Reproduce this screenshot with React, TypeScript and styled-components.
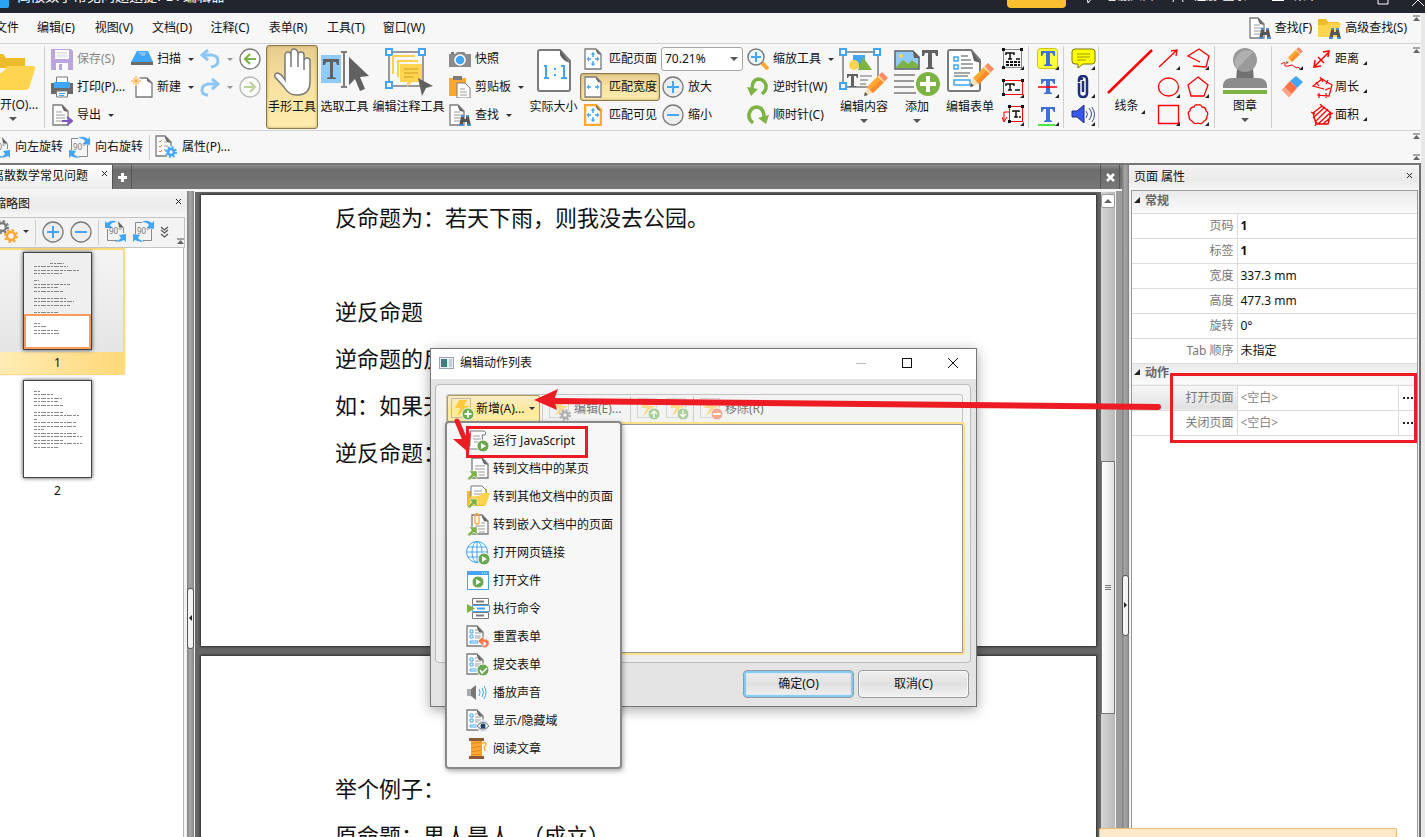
import React from "react";
import styled, { createGlobalStyle, css } from "styled-components";

const Global = createGlobalStyle`
  * { box-sizing: border-box; }
  html, body { margin: 0; }
  body, button, select {
    font-family: "Noto Sans", "Noto Sans CJK SC", sans-serif;
    font-size: 12px;
    line-height: 16px;
    color: #111;
  }
  button { background: none; border: 0; padding: 0; white-space: nowrap; }
  svg { display: block; flex: none; }
`;

/* ---------- palette ---------- */
const BLUE = "#42a5f5";
const GREEN = "#7cb342";
const GREY = "#7b7b7b";
const DARK = "#616161";
const YEL = "#ffd54f";
const ORG = "#ffa733";
const RED = "#ff0000";

/* ---------- shell ---------- */
const Shell = styled.div`
  position: relative;
  display: flex;
  flex-direction: column;
  height: 100vh;
  overflow: hidden;
  background: #e8e8e8;
`;
const TitleBar = styled.header`
  display: flex;
  align-items: flex-end;
  flex: none;
  height: 13px;
  padding-bottom: 5px;
  overflow: hidden;
  background: #22252e;
  color: #fff;
`;
const Logo = styled.span`
  width: 9px;
  height: 16px;
  border-radius: 0 0 2px 0;
  background: #29a3f2;
`;
const Title = styled.span`
  flex: 1;
  margin-left: 8px;
  font-size: 14px;
  line-height: 24px;
  white-space: nowrap;
`;
const BuyButton = styled.button`
  width: 59px;
  height: 26px;
  margin-right: 18px;
  border-radius: 4px;
  background: #fbc02d;
  line-height: 26px;
`;
const TitleItem = styled.button<{ $w: number }>`
  display: flex;
  align-items: center;
  justify-content: flex-start;
  gap: 10px;
  width: ${(p) => p.$w}px;
  line-height: 24px;
  color: #fff;
`;
const Frame = styled.div`
  display: flex;
  flex-direction: column;
  flex: 1;
  min-height: 0;
  margin-right: 4px;
  background: #f7f7f7;
`;
const MenuBar = styled.nav`
  display: flex;
  align-items: center;
  flex: none;
  height: 31px;
  padding-right: 1px;
  border-bottom: 1px solid #d2d2d2;
`;
const MenuItem = styled.button`
  width: 58px;
  flex: none;
  text-align: center;
  &:first-child {
    margin-left: -31px;
    padding-right: 8px;
    text-align: right;
  }
`;
const Grow = styled.div`
  flex: 1;
`;
const SearchButton = styled.button`
  display: flex;
  align-items: center;
  gap: 4px;
  margin-right: 6px;
`;
const CollapseSlot = styled.div<{ $end?: boolean }>`
  display: flex;
  flex-direction: column;
  align-self: stretch;
  justify-content: ${(p) => (p.$end ? "space-between" : "flex-start")};
  padding: 2px 0;
  margin-left: auto;
`;
const Ribbon = styled.div`
  display: flex;
  flex: none;
  height: 87px;
  padding-top: 1px;
  padding-right: 1px;
  margin-left: -17px;
  border-bottom: 1px solid #d2d2d2;
`;
const Sep = styled.i<{ $h?: number }>`
  flex: none;
  width: 1px;
  height: ${(p) => p.$h || 82}px;
  margin: 1px 5px 0 1px;
  background: #cfcfcf;
`;
const Col = styled.div<{ $w: number; $pad?: number; $center?: boolean }>`
  display: flex;
  flex-direction: column;
  flex: none;
  align-items: ${(p) => (p.$center ? "center" : "stretch")};
  width: ${(p) => p.$w}px;
  padding-left: ${(p) => p.$pad || 0}px;
`;
const hot = css`
  border: 1px solid #8d7a4b;
  border-radius: 3px;
  background: linear-gradient(#e6cd8f, #f7e0a0 45%, #ffeeb0);
  box-shadow: inset 0 0 3px #b59a5a;
`;
const Small = styled.button<{ $gap?: number; $off?: boolean; $hot?: boolean; $inset?: boolean }>`
  display: flex;
  align-items: center;
  gap: ${(p) => p.$gap ?? 4}px;
  height: 28px;
  padding-left: ${(p) => (p.$inset ? 3 : 0)}px;
  border: 1px solid transparent;
  opacity: ${(p) => (p.$off ? 0.5 : 1)};
  ${(p) => p.$hot && hot}
`;
const Big = styled.button<{ $w: number; $hot?: boolean }>`
  display: flex;
  flex-direction: column;
  align-items: center;
  flex: none;
  width: ${(p) => p.$w}px;
  height: 84px;
  padding-top: 2px;
  border: 1px solid transparent;
  ${(p) => p.$hot && hot}
`;
const BigLabel = styled.span`
  display: flex;
  align-items: flex-end;
  margin: 3px -4px 4px;
`;
const ZoomBox = styled.label`
  position: relative;
  display: flex;
  align-items: center;
  width: 82px;
  height: 28px;
`;
const ZoomSelect = styled.select`
  appearance: none;
  width: 100%;
  height: 24px;
  padding: 0 3px;
  border: 1px solid #a5a5a5;
  border-radius: 3px;
  background: #fff;
`;
const SelectArrow = styled.span`
  position: absolute;
  right: 5px;
  pointer-events: none;
`;
const SubBar = styled.div`
  display: flex;
  align-items: center;
  flex: none;
  height: 32px;
  padding-right: 1px;
  margin-left: -12px;
`;
const SubButton = styled.button`
  display: flex;
  align-items: center;
  gap: 4px;
  margin-right: 5px;
`;

/* ---------- workspace ---------- */
const Work = styled.div`
  display: flex;
  flex: 1;
  min-height: 0;
  border-top: 2px solid #777;
  border-right: 2px solid #6e6e6e;
  background: #9c9c9c;
`;
const Left = styled.div`
  display: flex;
  flex-direction: column;
  flex: 1;
  min-width: 0;
`;
const TabBar = styled.div`
  display: flex;
  flex: none;
  height: 26px;
  padding-right: 2px;
  border-bottom: 2px solid #f5f5f5;
  background: linear-gradient(#8e8e8e, #6c6c6c 20%, #777);
`;
const Tab = styled.div`
  display: flex;
  justify-content: space-between;
  flex: none;
  width: 120px;
  margin-left: -8px;
  padding: 2px 4px 0 0;
  background: linear-gradient(#fff, #ececec);
  white-space: nowrap;
`;
const TabLabel = styled.span`
  line-height: 18px;
`;
const TabClose = styled.button`
  height: 12px;
`;
const TabButton = styled.button`
  display: flex;
  align-items: center;
  justify-content: center;
  width: 20px;
  border: solid #555;
  border-width: 0 1px;
`;
const Row = styled.div`
  display: flex;
  flex: 1;
  min-height: 0;
`;
const Side = styled.aside`
  display: flex;
  flex-direction: column;
  flex: none;
  width: 187px;
  background: #f3f3f3;
`;
const PanelHead = styled.div<{ $h: number }>`
  display: flex;
  justify-content: space-between;
  flex: none;
  height: ${(p) => p.$h}px;
  padding: 4px 5px 0 5px;
  background: linear-gradient(#f3f3f3, #eaeaea 60%, #f6f6f6);
  line-height: 16px;
`;
const Cut = styled.span`
  margin-left: -11px;
  line-height: 18px;
`;
const SideTools = styled.div`
  display: flex;
  align-items: center;
  flex: none;
  height: 31px;
  margin-right: 2px;
  padding-bottom: 2px;
  border: solid #c4c4c4;
  border-width: 1px 1px 1px 0;
`;
const Tool = styled.button<{ $w: number }>`
  display: flex;
  align-items: center;
  justify-content: center;
  flex: none;
  width: ${(p) => p.$w}px;
`;
const ToolEnd = styled.span`
  align-self: flex-end;
  margin-left: auto;
`;
const Thumbs = styled.div`
  display: flex;
  flex-direction: column;
  gap: 1px;
  flex: 1;
  margin-right: 3px;
  border-right: 1px solid #b5b5b5;
  background: #fff;
  overflow: hidden;
`;
const ThumbItem = styled.button<{ $on?: boolean }>`
  display: flex;
  flex-direction: column;
  align-items: center;
  flex: none;
  width: 135px;
  height: ${(p) => (p.$on ? 127 : 128)}px;
  margin-left: -10px;
  padding-top: 2px;
  border: 2px solid transparent;
  ${(p) =>
    p.$on &&
    css`
      border-color: #ffd97a;
      border-radius: 2px;
      box-shadow: 0 0 1px #999;
      background: linear-gradient(#f4f4f4, #e2e2e2);
    `}
`;
const ThumbPage = styled.span`
  position: relative;
  width: 69px;
  height: 98px;
  background: #fff;
  border: 1px solid #444;
  box-shadow: 0 0 4px #444;
`;
const ThumbShade = styled.span`
  position: absolute;
  inset: 0 0 34px;
  background: rgba(120, 120, 120, 0.12);
`;
const ViewFrame = styled.span`
  position: absolute;
  left: 0;
  right: 0;
  bottom: 0;
  height: 35px;
  border: 2px solid #ff9a5c;
`;
const ThumbLabel = styled.span<{ $on?: boolean }>`
  align-self: stretch;
  margin-top: 2px;
  line-height: 22px;
  background: ${(p) => (p.$on ? "linear-gradient(90deg, #ffedb8, #ffd97a)" : "none")};
`;
const Splitter = styled.div`
  display: flex;
  align-items: center;
  flex: none;
  width: 7px;
  background: linear-gradient(90deg, #7d7d7d, #a6a6a6 40%, #989898 75%, #7d7d7d);
`;
const Grip = styled.button`
  display: flex;
  align-items: center;
  justify-content: center;
  width: 7px;
  height: 61px;
  margin-top: 208px;
  border: 1px solid #555;
  border-radius: 3px;
  background: #f4f4f4;
`;
const Viewer = styled.main`
  display: flex;
  flex: 1;
  min-width: 0;
  margin-right: 6px;
  border: solid #f2f2f2;
  border-width: 1px 1px 0 1px;
  background: #666;
`;
const Pages = styled.div`
  flex: 1;
  min-width: 0;
  padding: 3px 5px 0 6px;
  overflow: hidden;
`;
const Page = styled.article<{ $h: number; $top: number }>`
  height: ${(p) => p.$h}px;
  margin-bottom: 10px;
  padding: ${(p) => p.$top}px 0 0 134px;
  background: #fff;
  box-shadow: 0 0 2px 1px #2e2e2e;
  overflow: hidden;
`;
const Line = styled.p`
  height: 47px;
  margin: 0;
  font-size: 22px;
  line-height: 45px;
  white-space: nowrap;
`;
const ScrollBar = styled.div`
  display: flex;
  flex-direction: column;
  flex: none;
  width: 14px;
  padding-top: 2px;
  background: linear-gradient(90deg, #d6d6d6, #b9b9b9);
`;
const ScrollUp = styled.button`
  display: flex;
  align-items: center;
  justify-content: center;
  height: 14px;
  margin-bottom: 253px;
  border: 1px solid #999;
  border-radius: 2px;
  background: #fff;
`;
const ScrollThumb = styled.div`
  display: flex;
  align-items: center;
  justify-content: center;
  height: 253px;
  border: 1px solid #777;
  background: linear-gradient(90deg, #fff, #e2e2e2);
`;

/* ---------- property panel ---------- */
const Props = styled.aside`
  flex: none;
  width: 290px;
  padding-right: 1px;
  background: #f3f3f3;
`;
const PropBody = styled.div`
  height: calc(100% - 25px);
  margin-left: 2px;
  border: 1px solid #999;
  border-bottom: 0;
  background: #fff;
`;
const Grid = styled.table`
  width: 100%;
  border-collapse: collapse;
  table-layout: fixed;
`;
const NameCol = styled.col`
  width: 105px;
`;
const DotCol = styled.col`
  width: 18px;
`;
const Section = styled.th`
  height: 22px;
  padding: 0 0 2px 2px;
  border-bottom: 1px solid #dcdcdc;
  background: linear-gradient(#ebebeb, #fafafa);
  text-align: left;
  color: #666;
  white-space: nowrap;
`;
const Tri = styled.svg`
  && { display: inline-block; }
  margin-right: 5px;
  vertical-align: 2px;
`;
const Name = styled.th<{ $on?: boolean }>`
  height: 25px;
  padding: 0 3px 0 0;
  border: solid #dcdcdc;
  border-width: 0 1px 1px 0;
  background: ${(p) => (p.$on ? "linear-gradient(#f7f7f7, #e0e0e0)" : "none")};
  text-align: right;
  font-weight: 400;
  color: #777;
`;
const Value = styled.td<{ $bold?: boolean; $dim?: boolean }>`
  padding: 0 0 0 3px;
  border-bottom: 1px solid #dcdcdc;
  font-weight: ${(p) => (p.$bold ? 700 : 400)};
  color: ${(p) => (p.$dim ? "#888" : "#111")};
`;
const Dots = styled.td`
  padding: 0;
  border: solid #dcdcdc;
  border-width: 0 0 1px 1px;
`;
const DotButton = styled.button`
  display: flex;
  justify-content: center;
  width: 100%;
`;
const Toast = styled.div`
  position: absolute;
  right: 28px;
  bottom: 0;
  width: 298px;
  height: 9px;
  border: 1px solid #efbd72;
  border-bottom: 0;
  border-radius: 2px 2px 0 0;
  background: #fde8c9;
`;

/* ---------- dialog ---------- */
const Dialog = styled.section`
  position: absolute;
  left: 430px;
  top: 348px;
  width: 547px;
  border: 1px solid #777;
  background: #e4e4e4;
  box-shadow: 0 3px 12px rgba(0, 0, 0, 0.35);
`;
const DialogHead = styled.div`
  display: flex;
  align-items: center;
  height: 30px;
  padding: 0 3px 2px 8px;
  gap: 6px;
  background: #fff;
`;
const WinButton = styled.button`
  display: flex;
  justify-content: center;
  width: 40px;
`;
const DialogPanel = styled.div`
  margin: 5px 5px 7px 4px;
  padding: 9px 7px 7px 9px;
  border: 1px solid #bbb;
  border-radius: 4px;
  background: linear-gradient(#f4f4f4, #ececec);
`;
const ActionBar = styled.div`
  display: flex;
  align-items: center;
  height: 28px;
  margin-left: 1px;
  border: 1px solid #c4c4c4;
  border-bottom: 0;
  border-radius: 3px 3px 0 0;
`;
const Action = styled.button<{ $w: number; $open?: boolean }>`
  display: flex;
  align-items: center;
  gap: 1px;
  width: ${(p) => p.$w}px;
  height: 27px;
  padding-left: 2px;
  border: 1px solid transparent;
  color: ${(p) => (p.$open ? "#111" : "#777")};
  ${(p) =>
    p.$open &&
    css`
      border-color: #b39b5e;
      border-radius: 2px;
      background: linear-gradient(#f8ecc8, #ffe99a 60%, #fff0a8);
    `}
`;
const ActionSep = styled.i`
  width: 1px;
  height: 26px;
  margin: 0 2px;
  background: #ccc;
`;
const ActionList = styled.div`
  height: 233px;
  margin-right: -2px;
  border: 2px solid #ffe08a;
  border-radius: 3px;
  background: #fff;
  box-shadow: inset 0 0 0 1px #999;
`;
const DialogFoot = styled.div`
  display: flex;
  justify-content: flex-end;
  gap: 4px;
  padding: 0 7px 8px 0;
`;
const FootButton = styled.button<{ $main?: boolean }>`
  width: 111px;
  height: 28px;
  border: 1px solid #999;
  border-radius: 4px;
  background: linear-gradient(#f0f0f0, #e0e0e0 50%, #f2f2f2);
  box-shadow: ${(p) => (p.$main ? "inset 0 0 1px 2px #7fcaf7" : "inset 0 0 0 1px #f7f7f7")};
`;
const Popup = styled.ul`
  position: absolute;
  left: 14px;
  top: 72px;
  width: 177px;
  margin: 0;
  padding: 4px 0 4px 19px;
  border: 2px solid #888;
  border-radius: 4px;
  background: #f7f7f7;
  box-shadow: 1px 2px 5px rgba(0, 0, 0, 0.35);
  list-style: none;
`;
const PopupItem = styled.button`
  display: flex;
  align-items: center;
  gap: 3px;
  height: 28px;
`;
const Marks = styled.svg`
  position: absolute;
  left: 0;
  top: 0;
  pointer-events: none;
`;

/* ---------- icons ---------- */
type IconProps = { w: number; h: number; children: React.ReactNode };
const Icon = ({ w, h, children }: IconProps) => (
  <svg width={w} height={h} viewBox={`0 0 ${w} ${h}`} fill="none" aria-hidden="true">
    {children}
  </svg>
);
const Caret = ({ big }: { big?: boolean }) =>
  big ? (
    <Icon w={8} h={4}><path d="M0 0h8L4 4z" fill="#555" /></Icon>
  ) : (
    <Icon w={6} h={3}><path d="M0 0h6L3 3z" fill="#333" /></Icon>
  );
const Corner = ({ x, y }: { x: number; y: number }) => (
  <path d={`M${x} ${y - 4}v4h-4z`} fill="#222" stroke="none" />
);
const CornerMark = () => <Icon w={6} h={12}><Corner x={6} y={12} /></Icon>;
const CloseX = ({ s = 7 }: { s?: number }) => (
  <Icon w={s} h={s}><path d={`M1 1L${s - 1} ${s - 1}M${s - 1} 1L1 ${s - 1}`} stroke="#222" /></Icon>
);
const Collapse = () => (
  <Icon w={7} h={7}><path d="M0 1h7" stroke="#555" /><path d="M0 6h7L3.500 2z" fill="#666" /></Icon>
);
const Sheet = ({ x = 2, y = 1, w = 16, h = 19 }: { x?: number; y?: number; w?: number; h?: number }) => (
  <>
    <path d={`M${x} ${y}h${w - 6}l6 6v${h - 6}h-${w}z`} fill="#fff" stroke={GREY} strokeWidth="1.300" />
    <path d={`M${x + w - 6} ${y}v2l2 4l4 1z`} fill={DARK} />
  </>
);
const DocLines = () => <path d="M5 8h6M5 11h9M5 14h9M5 17h7" stroke="#999" />;
const Binoc = ({ x, y }: { x: number; y: number }) => (
  <g transform={`translate(${x} ${y})`}>
    <path d="M2 2h3v2h2V2h3l2 9H8V7H4v4H0z" fill="#555" />
    <path d="M2 0h3v2H2zM7 0h3v2H7zM0 9h4v2H0zM8 9h4v2H8z" fill="#4a90d9" />
  </g>
);
const Circ = ({ k, dim }: { k: string; dim?: boolean }) => (
  <Icon w={22} h={22}>
    <g opacity={dim ? 0.5 : 1}>
      <circle cx="11" cy="11" r="10" fill={k === "+" || k === "-" ? "#eee" : "#fff"} stroke={GREY} strokeWidth="1.300" />
      {k === "+" && <path d="M5 11h12M11 5v12" stroke={BLUE} strokeWidth="2" />}
      {k === "-" && <path d="M5 11h12" stroke={BLUE} strokeWidth="2" />}
      {k === "<" && <path d="M17 11H7M11 6l-5 5 5 5" stroke={GREEN} strokeWidth="2.200" />}
      {k === ">" && <path d="M5 11h10M11 6l5 5-5 5" stroke={GREEN} strokeWidth="2.200" />}
    </g>
  </Icon>
);
const Pencil = ({ x, y, s = 1 }: { x: number; y: number; s?: number }) => (
  <g transform={`translate(${x} ${y}) scale(${s})`}>
    <path d="M0 24l3-9 6 6z" fill="#ffe0b2" /><path d="M0 24l1-4 3 3z" fill="#555" />
    <path d="M3 15L15 3l6 6L9 21z" fill={ORG} /><path d="M6 18L18 6l3 3L9 21z" fill="#fb8c2e" />
    <path d="M15 3l3-3 6 6-3 3z" fill="#ff8a65" /><path d="M14 4l6 6" stroke="#ffe0b2" strokeWidth="1.500" />
  </g>
);
const Handles = ({ s }: { s: number }) => (
  <>
    <rect x="4" y="4" width={s - 8} height={s - 8} stroke="#999" strokeWidth="2" />
    {[[1, 1], [s - 8, 1], [1, s - 8]].map(([x, y]) => (
      <rect key={`${x}-${y}`} x={x} y={y} width="6" height="6" fill="#fff" stroke={BLUE} strokeWidth="2" />
    ))}
  </>
);
const Arr90 = ({ left }: { left?: boolean }) => (
  <Icon w={23} h={23}>
    <path d={left ? "M3.500 9v11.500H13M19.500 8v5" : "M3.500 14V2.500H10M19.500 9v11.500H11"} stroke="#8a8a8a" />
    {left ? (
      <><path d="M14 1l6 7-5-1z" fill={DARK} /><path d="M1 8V1l2 2q5-4 10-1-5 0-7 3l2 3z" fill={BLUE} />
        <path d="M22 14v8l-2-2q-5 3-10 1 5 0 7-3l-2-3z" fill={BLUE} /></>
    ) : (
      <><path d="M22 9V1l-2 2q-5-4-10-1 5 0 7 3l-2 3z" fill={BLUE} />
        <path d="M1 14v8l2-2q5 3 10 1-5 0-7-3l2-3z" fill={BLUE} /></>
    )}
    <text x="5" y="14" fontSize="8" fill="#777">90°</text>
  </Icon>
);
const FitSheet = ({ cross, frame }: { cross?: boolean; frame?: boolean }) => (
  <Icon w={18} h={22}>
    <path d="M1 1h11l5 5v15H1z" fill="#fff" stroke={frame ? ORG : GREY} strokeWidth={frame ? 2.5 : 1.3} />
    <path d="M12 1v2l2 3 3 1z" fill={DARK} />
    <path d="M7 11H4M11 11h3" stroke={BLUE} strokeWidth="1.500" />
    <path d="M5 8.500L2.500 11 5 13.500zM13 8.500l2.500 2.500-2.500 2.500z" fill={BLUE} />
    {cross && <><path d="M9 9V6M9 13v3" stroke={BLUE} strokeWidth="1.500" />
      <path d="M6.500 6.500L9 4l2.500 2.500zM6.500 15.500L9 18l2.500-2.500z" fill={BLUE} /></>}
  </Icon>
);
const Gear = ({ x, y, r, c }: { x: number; y: number; r: number; c: string }) => (
  <g>
    <circle cx={x} cy={y} r={r - 2} stroke={c} strokeWidth="2.500" />
    <circle cx={x} cy={y} r={r} stroke={c} strokeWidth="2" strokeDasharray={`${r * 0.39} ${r * 0.395}`} />
  </g>
);
const Bolt = ({ badge, dim }: { badge: string; dim?: boolean }) => (
  <Icon w={25} h={24}>
    <g opacity={dim ? 0.55 : 1}>
      <rect x="1.500" y="1.500" width="19" height="19" stroke="#888" strokeDasharray="1 1" />
      <path d="M9 3h8l-3 6h6L7 19l4-8H5z" fill="#ffc83d" />
      {badge === "gear" ? <><circle cx="17" cy="18" r="5" fill="#f2f2f2" /><Gear x={17} y={18} r={5} c="#777" /></> : (
        <circle cx="18" cy="17" r="6" fill={badge === "-" ? "#ff7043" : "#6ab04c"} stroke="#f4f4f4" />
      )}
      {badge === "+" && <path d="M14.500 17h7M18 13.500v7" stroke="#fff" strokeWidth="2" />}
      {badge === "-" && <path d="M14 17h8" stroke="#fff" strokeWidth="2" />}
      {badge === "up" && <path d="M18 21v-6M15 17l3-3 3 3" stroke="#fff" strokeWidth="1.500" />}
      {badge === "down" && <path d="M18 13v6M15 17l3 3 3-3" stroke="#fff" strokeWidth="1.500" />}
    </g>
  </Icon>
);
const Play = ({ x, y }: { x: number; y: number }) => (
  <><circle cx={x} cy={y} r="6" fill="#6aa84f" stroke="#f7f7f7" /><path d={`M${x - 2} ${y - 3}v6l5-3z`} fill="#fff" /></>
);
const GoArrow = () => <path d="M1 22l5-5-3-3h8v8l-3-3-4 4z" fill={GREEN} stroke="#f7f7f7" strokeWidth="0.500" />;
const FormLines = () => (
  <>
    <path d="M4 5h3v3H4zM4 10h3v3H4zM4 16h8v2H4z" stroke={BLUE} />
    <path d="M9 5h3M9 8h6M9 11h6M9 13h5" stroke="#999" />
  </>
);

const menuEntries: { label: string; icon: React.ReactNode }[] = [
  { label: "运行 JavaScript", icon: <><path d="M4 2h14q3 1 1 4h-3l2 14H4q-3 0-2-3h2z" fill="#fff" stroke={GREY} /><path d="M7 7h7M7 10h8M8 13h5" stroke="#999" /><Play x={17} y={17} /></> },
  { label: "转到文档中的某页", icon: <><Sheet x={6} w={16} h={20} /><path d="M9 9h10M9 12h10M12 15h7M13 18h6" stroke="#999" /><GoArrow /></> },
  { label: "转到其他文档中的页面", icon: <><path d="M1 6h6v-2h14v5h2l-4 12H1z" fill="#f0bb27" /><path d="M5 1h11l4 4v8H5z" fill="#fff" stroke={GREY} /><path d="M8 6h8M8 9h9" stroke="#999" /><path d="M5 11q9 1 11-3h8l-4 12H3z" fill={YEL} /><GoArrow /></> },
  { label: "转到嵌入文档中的页面", icon: <><Sheet x={6} y={2} w={16} h={19} /><path d="M15 10h4M9 13h10M12 16h7M13 19h6" stroke="#999" /><path d="M9 2v8q2 2 4 0V2q-2-3-4 0" stroke={ORG} strokeWidth="1.300" /><GoArrow /></> },
  { label: "打开网页链接", icon: <><circle cx="11" cy="11" r="10.500" fill="#fff" stroke={BLUE} /><ellipse cx="11" cy="11" rx="5" ry="10.500" stroke={BLUE} /><path d="M0 11h22M2 6h18M2 16h18M11 0v22" stroke={BLUE} /><Play x={18} y={18} /></> },
  { label: "打开文件", icon: <><rect x="1.500" y="2.500" width="21" height="18" fill="#fff" stroke={BLUE} /><path d="M1 2h22v4H1z" fill={BLUE} /><path d="M16 4h1M18 4h1M20 4h1" stroke="#fff" /><Play x={12} y={13} /></> },
  { label: "执行命令", icon: <><path d="M6.500 1.500h16v6h-16zM6.500 15.500h16v6h-16z" fill="#fff" stroke={GREY} /><path d="M6.500 8.500h17v6h-17z" fill="#fff" stroke={BLUE} /><path d="M10 4.500h8M10 18.500h8" stroke={GREY} strokeWidth="2" /><path d="M11 11.500h8" stroke={BLUE} strokeWidth="2" /><path d="M1 7v9l8-4.500z" fill={GREEN} /></> },
  { label: "重置表单", icon: <><Sheet x={1} h={20} /><FormLines /><path d="M12 16l5-5v3q7 0 6 5-1 4-6 4v-2q4-1 3-3-1-1-3-1v4z" fill="#ff7043" stroke="#f7f7f7" strokeWidth="0.500" /></> },
  { label: "提交表单", icon: <><Sheet x={1} h={20} /><FormLines /><circle cx="17" cy="17" r="6" fill="#6aa84f" stroke="#f7f7f7" /><path d="M14 17l2 3 5-5" stroke="#fff" strokeWidth="1.500" /></> },
  { label: "播放声音", icon: <><path d="M1 8h4v7H1z" fill="#aaa" /><path d="M5 8l5-4v15l-5-4z" fill="#777" /><path d="M13 8q2 3 0 7M16 7q3 4 0 9M18 5q4 6 0 13" stroke={BLUE} /></> },
  { label: "显示/隐藏域", icon: <><Sheet x={1} h={20} /><FormLines /><circle cx="17" cy="17" r="6" fill="#ccd4dc" stroke="#f7f7f7" /><path d="M11 17q6-7 12 0-6 6-12 0z" fill="#fff" stroke="#777" /><circle cx="17" cy="17" r="2.500" fill="#1c3f66" /></> },
  { label: "阅读文章", icon: <><path d="M3 1h15v3H3zM3 19h15v3H3z" fill="#8a5a3b" /><path d="M5 4h11v15H5z" fill={ORG} /><path d="M5 7l11-2M5 11l11-2M5 15l11-2M5 18l11-1" stroke="#e58a1f" /><path d="M16 7q3-3 4 0 0 2-2 3l1 4" stroke={ORG} strokeWidth="1.300" /></> },
];

const Stripes = ({ rows }: { rows: number[][] }) => (
  <Icon w={67} h={96}>
    {rows.map(([y, w, x = 10]) => (
      <path key={y} d={`M${x} ${y}.500h${w}`} stroke="#555" strokeOpacity="0.700" strokeDasharray="3 1 2 1 5 1" />
    ))}
  </Icon>
);

const props: [string, string, boolean][] = [
  ["页码", "1", true], ["标签", "1", true], ["宽度", "337.3 mm", false],
  ["高度", "477.3 mm", false], ["旋转", "0°", false], ["Tab 顺序", "未指定", false],
];

const SheetFind = () => <Icon w={22} h={23}><Sheet h={20} w={14} x={1} /><DocLines /><Binoc x={10} y={11} /></Icon>;
const Triangle = () => <Tri width="6" height="6" viewBox="0 0 6 6"><path d="M6 0v6H0z" fill="#222" /></Tri>;

const Shape = ({ children }: { children: React.ReactNode }) => (
  <Small><Icon w={24} h={24}><g stroke={RED} strokeWidth="1.300">{children}</g><Corner x={23} y={23} /></Icon></Small>
);

export default function App() {
  return (
    <Shell>
      <Global />
      <TitleBar>
        <Logo />
        <Title>离散数学常见问题迅捷PDF编辑器</Title>
        <BuyButton>购买</BuyButton>
        <TitleItem $w={88}><Icon w={12} h={16}><path d="M3 9l1 6 4-5" stroke="#fff" /></Icon>客服入口</TitleItem>
        <TitleItem $w={100}><Icon w={12} h={16}><path d="M1 14q0-4 3-4M11 14q0-3-2-4" stroke="#fff" /></Icon>注册/登录</TitleItem>
        <TitleItem $w={105}><Icon w={12} h={16}><path d="M0 12h12" stroke="#fff" strokeWidth="2" /></Icon>菜单</TitleItem>
        <TitleItem $w={35}><Icon w={12} h={16}><path d="M1 3v9h10V3" stroke="#fff" /></Icon></TitleItem>
        <TitleItem $w={13}><Icon w={12} h={16}><path d="M0 14l6-6 6 6" stroke="#fff" /></Icon></TitleItem>
      </TitleBar>
      <Frame>
        <MenuBar>
          {["文件", "编辑(E)", "视图(V)", "文档(D)", "注释(C)", "表单(R)", "工具(T)", "窗口(W)"].map((m) => (
            <MenuItem key={m}>{m}</MenuItem>
          ))}
          <Grow />
          <SearchButton><SheetFind />查找(F)</SearchButton>
          <SearchButton>
            <Icon w={23} h={23}><path d="M0 2h8l2 3h11v14H0z" fill="#eebb2c" /><path d="M0 8h8l3-2h12l-4 14H0z" fill={YEL} /><Binoc x={11} y={11} /></Icon>
            高级查找(S)
          </SearchButton>
          <CollapseSlot><Collapse /></CollapseSlot>
        </MenuBar>

        <Ribbon>
          <Big $w={60}>
            <Icon w={48} h={46}><path d="M0 6h14l3 4h19v10H0z" fill="#eebb2c" /><path d="M0 26q14 2 18-8h26q3 0 2 3l-6 19q-1 2-3 2H0z" fill={YEL} /></Icon>
            <BigLabel>打开(O)...</BigLabel><Caret big />
          </Big>
          <Sep />
          <Col $w={80}>
            <Small $off><Icon w={22} h={22}><path d="M0 1h20l2 2v19H0z" fill="#7e57c2" /><path d="M4 2h14v9H4z" fill="#fff" /><path d="M6 5h10M6 8h10" stroke="#aaa" /><path d="M5 15h12v7H5z" fill="#fff" /><path d="M8 16h3v6H8z" fill="#7e57c2" /></Icon>保存(S)</Small>
            <Small><Icon w={22} h={22}><path d="M5.500 1h11v8h-11z" fill="#fff" stroke={GREY} /><path d="M0 7h3v2h16V7h3v11H0z" fill="#6b6b6b" /><path d="M3 6h16v6H3z" fill={BLUE} /><path d="M5.500 15h11v6h-11z" fill="#fff" stroke={GREY} /><path d="M8 17.500h6M8 19.500h5" stroke={BLUE} /></Icon>打印(P)...</Small>
            <Small><Icon w={22} h={22}><Sheet x={2} w={15} h={20} /><DocLines /><path d="M11 17h9M16 13l5 4-5 4" stroke="#7e57c2" strokeWidth="2" /></Icon>导出&nbsp;<Caret /></Small>
          </Col>
          <Col $w={67}>
            <Small><Icon w={22} h={22}><path d="M6 3h11l5 11H0z" fill={BLUE} /><path d="M0 14h22v3H0z" fill="#6b6b6b" /><path d="M8 5h7M10 7h4" stroke="#bbdefb" /></Icon>扫描&nbsp;<Caret /></Small>
            <Small><Icon w={22} h={22}><path d="M5 2h11l5 5v14H5z" fill="#fff" stroke={GREY} strokeWidth="1.300" /><path d="M16 2v3l5 3z" fill={DARK} /><circle cx="5" cy="5" r="5" fill="#f7f7f7" /><path d="M5 0v10M0 5h10M2 2l6 6M8 2L2 8" stroke={ORG} /></Icon>新建&nbsp;<Caret /></Small>
          </Col>
          <Col $w={40} $pad={2}>
            <Small $gap={7} $off><Icon w={20} h={20}><path d="M2 6h10q6 1 6 6t-7 6" stroke="#2196f3" strokeWidth="3" /><path d="M8 1L2 6l6 5" stroke="#2196f3" strokeWidth="3" /></Icon><Caret /></Small>
            <Small $gap={7} $off><Icon w={20} h={20}><path d="M18 7H8q-6 1-6 6t6 5" stroke="#2196f3" strokeWidth="3" /><path d="M12 2l6 5-6 5" stroke="#2196f3" strokeWidth="3" /></Icon><Caret /></Small>
          </Col>
          <Col $w={29} $pad={1}>
            <Small><Circ k="<" /></Small>
            <Small><Circ k=">" dim /></Small>
          </Col>
          <Big $w={52} $hot>
            <Icon w={40} h={48}><path d="M13 27V8q0-4 3-4t3 4v11V5q0-4 3-4t4 4v14V7q0-3 3-3t3 3v15V13q0-3 3-3t3 3v21q0 12-11 13-10 1-15-8L3 29q-1-3 2-4 4 0 8 7z" fill="#fff" stroke={GREY} strokeWidth="1.500" /></Icon>
            <BigLabel>手形工具</BigLabel>
          </Big>
          <Big $w={53}>
            <Icon w={48} h={48}><path d="M0 7h20v28H0z" fill="#90caf9" /><path d="M2 11h16v6h-2l-1-3h-3v15l3 1v1H6v-1l3-1V14H5l-1 3H2z" fill={DARK} /><path d="M20 4h2l1 1 1-1h2M23 4v34M20 39h2l1-1 1 1h2" stroke={GREY} strokeWidth="2" /><path d="M28 9l20 19-9 1 5 12-5 2-5-12-6 6z" fill={DARK} /></Icon>
            <BigLabel>选取工具</BigLabel>
          </Big>
          <Big $w={75}>
            <Icon w={48} h={48}><Handles s={42} /><path d="M7 8h23M8 8v18M12 13h21M13 13v16" stroke="#fbd04a" strokeWidth="2" /><path d="M15 16h22v18H27l-5 5v-5h-7z" fill={YEL} /><path d="M19 21h14M19 25h14M19 29h10" stroke="#d79a1e" /><path d="M33 30l15 8-7 2-4 8z" fill={DARK} /></Icon>
            <BigLabel>编辑注释工具</BigLabel>
          </Big>
          <Col $w={81} $pad={2}>
            <Small><Icon w={22} h={22}><path d="M0 6h6l2-2h7l2 2h5v13H0z" fill="#8b8b8b" /><path d="M2 4h3v2H2z" fill="#777" /><circle cx="11" cy="12" r="5" fill={BLUE} stroke="#fff" strokeWidth="1.500" /></Icon>快照</Small>
            <Small><Icon w={22} h={22}><path d="M0 2h17v18H0z" fill={ORG} /><path d="M4 0h9v4H4z" fill={GREY} /><path d="M8 7h8l5 5v10H8z" fill="#fff" stroke={GREY} /><path d="M11 13h5M11 16h7M11 19h7" stroke="#999" /></Icon>剪贴板&nbsp;<Caret /></Small>
            <Small><SheetFind />查找&nbsp;<Caret /></Small>
          </Col>
          <Big $w={53}>
            <Icon w={36} h={48}><path d="M2 4q0-2 2-2h20l10 11v28q0 2-2 2H4q-2 0-2-2z" fill="#fff" stroke={GREY} strokeWidth="2" /><path d="M24 2v5q2 5 10 8z" fill={DARK} /><path d="M10 17v12M8 18h2M8 30h5M28 17v12M25 18h3M25 30h6" stroke={BLUE} strokeWidth="2" /><path d="M18 20h2v2h-2zM18 26h2v2h-2z" fill={BLUE} /></Icon>
            <BigLabel>实际大小</BigLabel>
          </Big>
          <Col $w={80}>
            <Small $gap={7} $inset><FitSheet cross />匹配页面</Small>
            <Small $gap={7} $inset $hot><FitSheet />匹配宽度</Small>
            <Small $gap={7} $inset><FitSheet cross frame />匹配可见</Small>
          </Col>
          <Col $w={85} $pad={1}>
            <ZoomBox>
              <ZoomSelect aria-label="缩放比例" defaultValue="70.21%"><option>70.21%</option></ZoomSelect>
              <SelectArrow><Caret big /></SelectArrow>
            </ZoomBox>
            <Small><Circ k="+" />放大</Small>
            <Small><Circ k="-" />缩小</Small>
          </Col>
          <Col $w={90} $pad={1}>
            <Small><Icon w={22} h={22}><path d="M14 14l7 7" stroke={ORG} strokeWidth="4" /><circle cx="9" cy="9" r="8" fill="#eef6fd" stroke={GREY} strokeWidth="1.500" /><path d="M4 9h10M9 4v10" stroke={BLUE} strokeWidth="2" /></Icon>缩放工具&nbsp;<Caret /></Small>
            <Small><Icon w={22} h={22}><path d="M15 18q5-4 4-9-2-6-8-6-6 1-6 10" stroke={GREEN} strokeWidth="3.500" /><path d="M0 11l11 2-7 7z" fill={GREEN} /></Icon>逆时针(W)</Small>
            <Small><Icon w={22} h={22}><path d="M6 19q-5-4-4-9 2-7 8-7 7 1 7 10" stroke={GREEN} strokeWidth="3.500" /><path d="M22 11l-11 3 8 6z" fill={GREEN} /></Icon>顺时针(C)</Small>
          </Col>
          <Big $w={58}>
            <Icon w={50} h={48}><Handles s={43} /><path d="M14 7h12v12H14z" fill={BLUE} /><path d="M24 9l9 13H19z" fill={GREEN} /><circle cx="15" cy="17" r="5" fill={YEL} /><path d="M8 26h11v4h-1l-1-2h-2v10h2v1H10v-1h2V28h-2l-1 2H8z" fill={DARK} /><path d="M21 28h12M21 32h8M21 36h6" stroke="#999" strokeWidth="1.500" /><Pencil x={25} y={24} /></Icon>
            <BigLabel>编辑内容</BigLabel><Caret big />
          </Big>
          <Big $w={48}>
            <Icon w={46} h={48}><path d="M1 3h18l6 6v12H1z" fill="#90caf9" stroke={DARK} strokeWidth="1.500" /><path d="M19 3l7 7h-6z" fill={DARK} /><circle cx="7" cy="8" r="2" fill={YEL} /><path d="M2 19l7-7 5 4 4-4 6 5v3H2z" fill={GREEN} /><path d="M28 2h16v6h-2l-1-3h-3v14l2 1v1h-8v-1l2-1V5h-3l-1 3h-2z" fill={DARK} /><path d="M0 27h21M0 33h20M0 39h20M0 45h22" stroke="#999" strokeWidth="2" /><circle cx="34" cy="36" r="12" fill={GREEN} /><path d="M26 36h16M34 28v16" stroke="#fff" strokeWidth="4" /></Icon>
            <BigLabel>添加</BigLabel><Caret big />
          </Big>
          <Big $w={58}>
            <Icon w={48} h={48}><path d="M2 4q0-2 2-2h21l9 10v29q0 2-2 2H4q-2 0-2-2z" fill="#fff" stroke={GREY} strokeWidth="2" /><path d="M25 2l10 13-7-2z" fill={DARK} /><path d="M8 9h4v4H8zM8 17h4v4H8zM8 32h16v5H8z" stroke={BLUE} strokeWidth="1.500" /><path d="M15 8h7M15 12h10M15 16h12M15 20h12M8 25h16M8 28h14" stroke="#888" strokeWidth="1.500" /><Pencil x={24} y={15} /></Icon>
            <BigLabel>编辑表单</BigLabel>
          </Big>
          <Col $w={28} $center>
            <Small><Icon w={22} h={22}><rect x="1.500" y="1.500" width="18" height="18" stroke="#111" strokeDasharray="1 1" /><path d="M4 7V5h8v2M8 5v6M6 11h4M14 11h4" stroke="#111" strokeWidth="1.500" /><path d="M4 14h14M4 17h14" stroke="#111" strokeWidth="2" strokeDasharray="3 1" /><path d="M0 0h3v3H0zM18 0h3v3h-3zM0 18h3v3H0z" fill="#111" /><Corner x={22} y={22} /></Icon></Small>
            <Small><Icon w={22} h={22}><rect x="1.500" y="4.500" width="19" height="14" fill="#fff" stroke={RED} /><path d="M4 10V8h8v2M8 8v6M6 14h4M13 14h5" stroke="#111" strokeWidth="1.500" /><path d="M0 3h3v3H0zM19 3h3v3h-3zM0 17h3v3H0z" fill="#111" /><Corner x={22} y={22} /></Icon></Small>
            <Small><Icon w={22} h={22}><rect x="7.500" y="2.500" width="13" height="15" fill="#fff" stroke={RED} /><path d="M11 8V7h6v1M14 7v6M12 13h4M17 13h2" stroke="#111" strokeWidth="1.500" /><path d="M7 8H2v9M0 13l2 5 3-5" stroke={RED} /><path d="M6 1h3v3H6zM19 1h3v3h-3zM6 16h3v3H6z" fill="#111" /><Corner x={22} y={22} /></Icon></Small>
          </Col>
          <Sep />
          <Col $w={28} $center>
            {["box", "strike", "under"].map((k) => (
              <Small key={k}><Icon w={24} h={24}>
                {k === "box" && <rect x="1.500" y="1.500" width="20" height="20" rx="3" fill="#ffff3a" stroke="#c9c900" />}
                <path d="M5 4h14v5h-1l-2-3h-2v11l2 1v1H8v-1l2-1V6H8L6 9H5z" fill="#3f6fd8" />
                {k === "strike" && <path d="M2 12h19" stroke={RED} strokeWidth="1.500" />}
                {k === "under" && <path d="M2 22h17" stroke="#10e010" strokeWidth="1.500" />}
                <Corner x={23} y={23} />
              </Icon></Small>
            ))}
          </Col>
          <Sep />
          <Col $w={28} $center>
            <Small><Icon w={25} h={24}><path d="M4 2h17q3 0 3 3v9q0 3-3 3h-9l-5 4v-4H4q-3 0-3-3V5q0-3 3-3z" fill="#ff0" stroke="#77770a" /><path d="M6 7h13M6 10h13M6 13h9" stroke="#99990a" /><Corner x={24} y={23} /></Icon></Small>
            <Small><Icon w={25} h={24}><path d="M8 8v10q0 4 4 4t4-4V5q0-4-4-4T8 5v2M12 6v11M9 5q0-2 3-1" stroke="#1f2f7a" strokeWidth="2.500" /><Corner x={24} y={23} /></Icon></Small>
            <Small><Icon w={25} h={24}><path d="M1 8h5l7-6v18l-7-6H1z" fill="#3857e8" stroke="#1f2f7a" /><path d="M15 8q3 3 0 7M18 5q5 6 0 12M21 4q5 8 0 15" stroke="#3a4a90" /><Corner x={24} y={23} /></Icon></Small>
          </Col>
          <Sep />
          <Big $w={51}>
            <Icon w={46} h={47}><path d="M1 45L45 2" stroke={RED} strokeWidth="2.500" /></Icon>
            <BigLabel>线条<CornerMark /></BigLabel>
          </Big>
          <Col $w={28} $center>
            <Shape><path d="M2 20L20 3M14 4l6-1-1 6" /></Shape>
            <Shape><ellipse cx="11.500" cy="12" rx="10" ry="9" /></Shape>
            <Shape><path d="M1.500 2.500h20v18h-20z" /></Shape>
          </Col>
          <Col $w={30} $center>
            <Shape><path d="M14 15L2 9l11-7 10 7-3 11-13-1" /></Shape>
            <Shape><path d="M12 2l10 8-4 11H5L2 10z" /></Shape>
            <Shape><path d="M12 2q3-1 4 2 4 0 4 4 3 2 1 5 0 4-3 5-2 4-6 2-4 2-6-2-3-1-3-5-2-4 1-5 0-4 4-4 1-3 4-2z" /></Shape>
          </Col>
          <Sep />
          <Big $w={50}>
            <Icon w={46} h={47}><path d="M15 20h16l1 14H14z" fill="#717171" /><circle cx="23" cy="12" r="12" fill="#9a9a9a" /><path d="M15 21A12 12 0 0 1 31 4z" fill="#b0b0b0" /><path d="M1 40v-3q1-7 9-7h26q8 0 9 7v3z" fill="#8c8c8c" /><path d="M1 42h44v4H1z" fill={GREEN} /></Icon>
            <BigLabel>图章</BigLabel><Caret big />
          </Big>
          <Sep />
          <Col $w={30} $center>
            <Small><Icon w={24} h={24}><Pencil x={6} y={0} s={0.7} /><path d="M1 17q5-3 4 0t3 2 4-1 3 2 3 0l3 3" stroke={RED} /><Corner x={23} y={23} /></Icon></Small>
            <Small><Icon w={24} h={24}><path d="M10 6l6-5 7 6-6 6z" fill={BLUE} /><path d="M2 15l8-9 7 7-8 9z" fill="#ff7043" /><path d="M2 15l3-3 7 7-3 3z" fill="#ffa58a" /></Icon></Small>
          </Col>
          <Col $w={60} $pad={3}>
            <Small $gap={2}><Icon w={22} h={22}><path d="M4 18L18 4M12 4l6-1-1 6M4 12l-1 7 7-1M7 9l6 6" stroke={RED} strokeWidth="1.500" /></Icon>距离<CornerMark /></Small>
            <Small $gap={2}><Icon w={22} h={22}><path d="M13 13L2 10l9-7 10 6-3 11-12-1M9 1l3 5M17 4l-2 4M5 6l3 4M19 12l-5 2M15 17v5M8 17v5" stroke={RED} strokeWidth="1.200" /></Icon>周长<CornerMark /></Small>
            <Small $gap={2}><Icon w={22} h={22}><path d="M11 2l9 7-3 11H5L2 9zM2 14L14 3M4 18L17 5M7 20L20 8M12 20l8-7M9 0l4 4M0 8l4 2M18 11l4-2M4 22l2-4" stroke={RED} strokeWidth="1.300" /></Icon>面积<CornerMark /></Small>
          </Col>
          <CollapseSlot><Collapse /></CollapseSlot>
        </Ribbon>

        <SubBar>
          <SubButton><Arr90 left />向左旋转</SubButton>
          <SubButton><Arr90 />向右旋转</SubButton>
          <Sep $h={25} />
          <SubButton><Icon w={23} h={24}><Sheet x={1} w={15} h={20} /><path d="M4 6l1 1 2-2M4 11l1 1 2-2M4 16l1 1 2-2" stroke="#ff7043" /><path d="M9 7h3M9 11h4M9 15h3" stroke="#999" /><circle cx="16" cy="17" r="6" fill="#f7f7f7" /><Gear x={16} y={17} r={5} c={BLUE} /></Icon>属性(P)...</SubButton>
          <CollapseSlot $end><Collapse /><Collapse /></CollapseSlot>
        </SubBar>

        <Work>
          <Left>
            <TabBar>
              <Tab><TabLabel>离散数学常见问题</TabLabel><TabClose aria-label="关闭标签"><CloseX /></TabClose></Tab>
              <TabButton aria-label="新标签"><Icon w={9} h={9}><path d="M0 4.500h9M4.500 0v9" stroke="#fff" strokeWidth="3" /></Icon></TabButton>
              <Grow />
              <TabButton aria-label="关闭文档"><Icon w={9} h={9}><path d="M1 1l7 7M8 1L1 8" stroke="#fff" strokeWidth="2.500" /></Icon></TabButton>
            </TabBar>
            <Row>
              <Side>
                <PanelHead $h={26}><Cut>缩略图</Cut><TabClose aria-label="关闭缩略图"><CloseX /></TabClose></PanelHead>
                <SideTools>
                  <Tool $w={18}><Icon w={18} h={24}><Gear x={2} y={7} r={6} c={GREY} /><Gear x={11} y={16} r={6} c={ORG} /></Icon></Tool>
                  <Tool $w={16}><Caret /></Tool>
                  <Sep $h={25} />
                  <Tool $w={24}><Circ k="+" /></Tool>
                  <Tool $w={32}><Circ k="-" /></Tool>
                  <Sep $h={25} />
                  <Tool $w={22}><Arr90 left /></Tool>
                  <Tool $w={34}><Arr90 /></Tool>
                  <Tool $w={9}><Icon w={9} h={12}><path d="M1 1l3.500 3L8 1M1 4l3.500 3L8 4M1 8l3.500 3L8 8" stroke="#555" strokeWidth="1.300" /></Icon></Tool>
                  <ToolEnd><Collapse /></ToolEnd>
                </SideTools>
                <Thumbs>
                  <ThumbItem $on>
                    <ThumbPage>
                      <Stripes rows={[[10, 14, 26], [13, 34], [17, 46], [20, 28], [27, 5], [31, 36], [34, 24], [38, 30], [45, 32], [48, 40], [52, 36], [59, 24], [62, 28], [70, 7], [73, 12], [77, 24], [80, 26]]} />
                      <ThumbShade /><ViewFrame />
                    </ThumbPage>
                    <ThumbLabel $on>1</ThumbLabel>
                  </ThumbItem>
                  <ThumbItem>
                    <ThumbPage>
                      <Stripes rows={[[10, 7], [13, 20], [17, 28], [20, 24], [24, 30], [31, 30], [34, 46], [38, 4], [41, 42], [45, 42], [48, 10], [52, 42], [55, 48], [59, 30], [62, 48], [66, 24]]} />
                    </ThumbPage>
                    <ThumbLabel>2</ThumbLabel>
                  </ThumbItem>
                </Thumbs>
              </Side>
              <Splitter><Grip aria-label="收起"><Icon w={3} h={6}><path d="M3 0v6L0 3z" fill="#222" /></Icon></Grip></Splitter>
              <Viewer>
                <Pages>
                  <Page $h={451} $top={0}>
                    <Line>反命题为：若天下雨，则我没去公园。</Line>
                    <Line />
                    <Line>逆反命题</Line>
                    <Line>逆命题的反命题</Line>
                    <Line>如：如果天下雨</Line>
                    <Line>逆反命题：</Line>
                  </Page>
                  <Page $h={600} $top={110}>
                    <Line>举个例子：</Line>
                    <Line>原命题：男人是人。（成立）</Line>
                  </Page>
                </Pages>
                <ScrollBar>
                  <ScrollUp aria-label="向上滚动"><Icon w={8} h={4}><path d="M4 0l4 4H0z" fill="#666" /></Icon></ScrollUp>
                  <ScrollThumb><Icon w={6} h={5}><path d="M0 .5h6M0 2.500h6M0 4.500h6" stroke="#777" /></Icon></ScrollThumb>
                </ScrollBar>
              </Viewer>
            </Row>
          </Left>
          <Splitter><Grip aria-label="收起属性"><Icon w={3} h={6}><path d="M0 0v6l3-3z" fill="#222" /></Icon></Grip></Splitter>
          <Props>
            <PanelHead $h={25}>页面 属性<TabClose aria-label="关闭属性"><CloseX /></TabClose></PanelHead>
            <PropBody>
              <Grid>
                <colgroup><NameCol /><col /><DotCol /></colgroup>
                <tbody>
                  <tr><Section colSpan={3}><Triangle />常规</Section></tr>
                  {props.map(([n, v, b]) => (
                    <tr key={n}><Name scope="row">{n}</Name><Value colSpan={2} $bold={b}>{v}</Value></tr>
                  ))}
                  <tr><Section colSpan={3}><Triangle />动作</Section></tr>
                  {["打开页面", "关闭页面"].map((n, i) => (
                    <tr key={n}>
                      <Name scope="row" $on={i === 0}>{n}</Name>
                      <Value $dim>&lt;空白&gt;</Value>
                      <Dots><DotButton aria-label={n}><Icon w={10} h={2}><path d="M0 0h2v2H0zM4 0h2v2H4zM8 0h2v2H8z" fill="#222" /></Icon></DotButton></Dots>
                    </tr>
                  ))}
                </tbody>
              </Grid>
            </PropBody>
          </Props>
        </Work>
      </Frame>
      <Toast />

      <Dialog aria-label="编辑动作列表">
        <DialogHead>
          <Icon w={15} h={12}><rect x=".5" y=".5" width="14" height="11" fill="#e8eef2" stroke="#9aa5ad" /><path d="M2 2h6v8H2z" fill="#3d7f7a" /><path d="M10 2h3v8h-3z" fill="#c5ced4" /></Icon>
          编辑动作列表
          <Grow />
          <WinButton aria-label="最小化"><Icon w={10} h={10}><path d="M0 5.500h10" stroke="#bbb" /></Icon></WinButton>
          <WinButton aria-label="最大化"><Icon w={10} h={10}><rect x=".5" y=".5" width="9" height="9" stroke="#111" /></Icon></WinButton>
          <WinButton aria-label="关闭"><Icon w={10} h={10}><path d="M0 0l10 10M10 0L0 10" stroke="#111" /></Icon></WinButton>
        </DialogHead>
        <DialogPanel>
          <ActionBar>
            <Action $w={93} $open><Bolt badge="+" />新增(A)...&nbsp;<Caret /></Action>
            <ActionSep />
            <Action $w={83}><Bolt badge="gear" dim />编辑(E)...</Action>
            <ActionSep />
            <Action $w={29}><Bolt badge="up" dim /></Action>
            <Action $w={29}><Bolt badge="down" dim /></Action>
            <ActionSep />
            <Action $w={80}><Bolt badge="-" dim />移除(R)</Action>
          </ActionBar>
          <ActionList />
        </DialogPanel>
        <DialogFoot>
          <FootButton $main>确定(O)</FootButton>
          <FootButton>取消(C)</FootButton>
        </DialogFoot>
        <Popup>
          {menuEntries.map((m) => (
            <li key={m.label}><PopupItem><Icon w={24} h={24}>{m.icon}</Icon>{m.label}</PopupItem></li>
          ))}
        </Popup>
      </Dialog>

      <Marks width="1425" height="837" viewBox="0 0 1425 837" fill="none" aria-hidden="true">
        <rect x="1171.500" y="374.500" width="244" height="67" stroke="#ed1c24" strokeWidth="3" />
        <rect x="467.500" y="427.500" width="119" height="29" stroke="#ed1c24" strokeWidth="3" />
        <path d="M1158 407L550 401" stroke="#ed1c24" strokeWidth="6" strokeLinecap="round" />
        <path d="M534 400l24-11-4 11 3 10z" fill="#ed1c24" />
        <path d="M457 421l8 19" stroke="#ed1c24" strokeWidth="5" strokeLinecap="round" />
        <path d="M469 453l-16-14 10 0 8-7z" fill="#ed1c24" />
      </Marks>
    </Shell>
  );
}
